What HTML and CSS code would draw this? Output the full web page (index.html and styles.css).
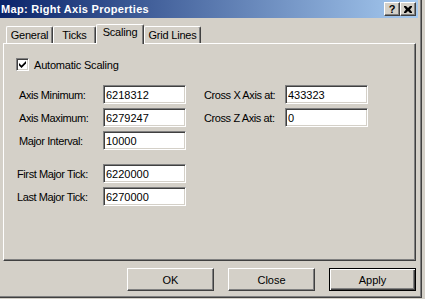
FILE: index.html
```html
<!DOCTYPE html>
<html lang="en">

<head>
    <meta charset="UTF-8">
    <meta name="viewport" content="width=device-width, initial-scale=1.0">
    <title>Map: Right Axis Properties</title>
    <link rel="stylesheet" href="styles.css">
</head>

<body>
    <div class="window">
        <div class="titlebar">
            <span class="title">Map: Right Axis Properties</span>
            <div class="caption-buttons">
                <span class="cap-btn help">?</span>
                <span class="cap-btn close">
                    <svg width="8" height="7" viewBox="0 0 8 7">
                        <path d="M0 0h2l2 2 2-2h2v1l-2 2.5 2 2.5v1h-2l-2-2-2 2h-2v-1l2-2.5-2-2.5z" fill="#000" />
                    </svg>
                </span>
            </div>
        </div>

        <div class="client">
            <div class="tabs">
                <div class="tab tab-general">General</div>
                <div class="tab tab-ticks">Ticks</div>
                <div class="tab tab-scaling active">Scaling</div>
                <div class="tab tab-grid">Grid Lines</div>
            </div>

            <div class="panel">
                <label class="check">
                    <span class="box">
                        <svg width="9" height="9" viewBox="0 0 9 9">
                            <path d="M1 3l2.5 2.5 4.5-4.5v2.5l-4.5 4.5-2.5-2.5z" fill="#000" />
                        </svg>
                    </span>
                    Automatic Scaling
                </label>

                <div class="fields">
                    <div class="row">
                        <span class="label">Axis Minimum:</span>
                        <input class="field" type="text" value="6218312">
                        <span class="label right">Cross X Axis at:</span>
                        <input class="field" type="text" value="433323">
                    </div>
                    <div class="row">
                        <span class="label">Axis Maximum:</span>
                        <input class="field" type="text" value="6279247">
                        <span class="label right">Cross Z Axis at:</span>
                        <input class="field" type="text" value="0">
                    </div>
                    <div class="row">
                        <span class="label">Major Interval:</span>
                        <input class="field" type="text" value="10000">
                    </div>
                </div>

                <div class="fields ticks">
                    <div class="row">
                        <span class="label">First Major Tick:</span>
                        <input class="field" type="text" value="6220000">
                    </div>
                    <div class="row">
                        <span class="label">Last Major Tick:</span>
                        <input class="field" type="text" value="6270000">
                    </div>
                </div>
            </div>

            <div class="buttons">
                <button class="btn">OK</button>
                <button class="btn">Close</button>
                <button class="btn default">Apply</button>
            </div>
        </div>
    </div>
</body>

</html>
```

FILE: styles.css
```css
body {
    margin: 0;
    width: 425px;
    height: 299px;
    overflow: hidden;
    background: #d4d0c8;
    font-family: 'Liberation Sans', Arial, sans-serif;
    font-size: 11px;
    color: #000;
}

.window {
    width: 421px;
    height: 297px;
    background: #d4d0c8;
    border-right: 1px solid #404040;
    border-bottom: 1px solid #404040;
    box-shadow: inset -1px -1px 0 #808080;
}

.titlebar {
    width: 418px;
    height: 18px;
    background: linear-gradient(to right, #0a246a, #a6caf0);
    display: flex;
    align-items: center;
    justify-content: space-between;
    box-sizing: border-box;
    padding-right: 2px;
}

.title {
    color: #fff;
    font-weight: bold;
    padding-left: 1px;
    letter-spacing: 0.3px;
}

.caption-buttons {
    display: flex;
}

.cap-btn {
    width: 16px;
    height: 14px;
    box-sizing: border-box;
    background: #d4d0c8;
    border-top: 1px solid #fff;
    border-left: 1px solid #fff;
    border-right: 1px solid #404040;
    border-bottom: 1px solid #404040;
    box-shadow: inset -1px -1px 0 #808080;
    display: flex;
    align-items: center;
    justify-content: center;
    font-weight: bold;
    font-size: 11px;
    line-height: 1;
}

.client {
    padding: 6px 0 0 3px;
}

.tabs {
    display: flex;
    align-items: flex-end;
    height: 19px;
    margin-left: 3px;
    position: relative;
    z-index: 1;
}

.tab {
    height: 17px;
    box-sizing: border-box;
    border-top: 1px solid #fff;
    border-left: 1px solid #fff;
    border-right: 1px solid #404040;
    border-radius: 2px 2px 0 0;
    box-shadow: inset -1px 0 0 #808080;
    text-align: center;
    line-height: 16px;
    background: #d4d0c8;
    letter-spacing: -0.2px;
}

.tab-general {
    width: 47px;
}

.tab-ticks {
    width: 43px;
}

.tab-scaling {
    width: 48px;
}

.tab-grid {
    width: 57px;
}

.tab.active {
    height: 20px;
    margin-bottom: -1px;
    line-height: 15px;
}

.panel {
    width: 413px;
    height: 218px;
    box-sizing: border-box;
    border-top: 1px solid #fff;
    border-left: 1px solid #fff;
    border-right: 1px solid #404040;
    border-bottom: 1px solid #404040;
    box-shadow: inset -1px -1px 0 #808080;
    padding: 14px 0 0 12px;
}

.check {
    display: flex;
    align-items: center;
    gap: 5px;
    height: 13px;
    letter-spacing: -0.2px;
}

.box {
    width: 13px;
    height: 13px;
    box-sizing: border-box;
    background: #fff;
    border-top: 1px solid #808080;
    border-left: 1px solid #808080;
    border-right: 1px solid #fff;
    border-bottom: 1px solid #fff;
    box-shadow: inset 1px 1px 0 #404040, inset -1px -1px 0 #d4d0c8;
    display: flex;
    align-items: center;
    justify-content: center;
}

.fields {
    margin-top: 14px;
    padding-left: 3px;
    display: flex;
    flex-direction: column;
    gap: 4px;
}

.fields.ticks {
    margin-top: 14px;
    padding-left: 1px;
}

.row {
    display: flex;
    align-items: center;
    height: 19px;
}

.label {
    width: 84px;
    flex: none;
    letter-spacing: -0.4px;
}

.ticks .label {
    width: 86px;
}

.label.right {
    width: 81px;
    margin-left: 18px;
}

.field {
    width: 83px;
    height: 19px;
    box-sizing: border-box;
    margin: 0;
    padding: 0 0 0 2px;
    font-family: 'Liberation Sans', Arial, sans-serif;
    font-size: 11px;
    color: #000;
    background: #fff;
    border-top: 1px solid #808080;
    border-left: 1px solid #808080;
    border-right: 1px solid #fff;
    border-bottom: 1px solid #fff;
    box-shadow: inset 1px 1px 0 #404040, inset -1px -1px 0 #d4d0c8;
    outline: none;
}

.buttons {
    display: flex;
    justify-content: flex-end;
    gap: 14px;
    width: 413px;
    margin-top: 7px;
}

.btn {
    width: 87px;
    height: 23px;
    margin: 0;
    padding: 0;
    box-sizing: border-box;
    font-family: 'Liberation Sans', Arial, sans-serif;
    font-size: 11px;
    color: #000;
    background: #d4d0c8;
    border-top: 1px solid #fff;
    border-left: 1px solid #fff;
    border-right: 1px solid #404040;
    border-bottom: 1px solid #404040;
    box-shadow: inset -1px -1px 0 #808080;
}

.btn.default {
    border: 1px solid #000;
    box-shadow: inset 1px 1px 0 #fff, inset -1px -1px 0 #404040, inset -2px -2px 0 #808080;
}
```
